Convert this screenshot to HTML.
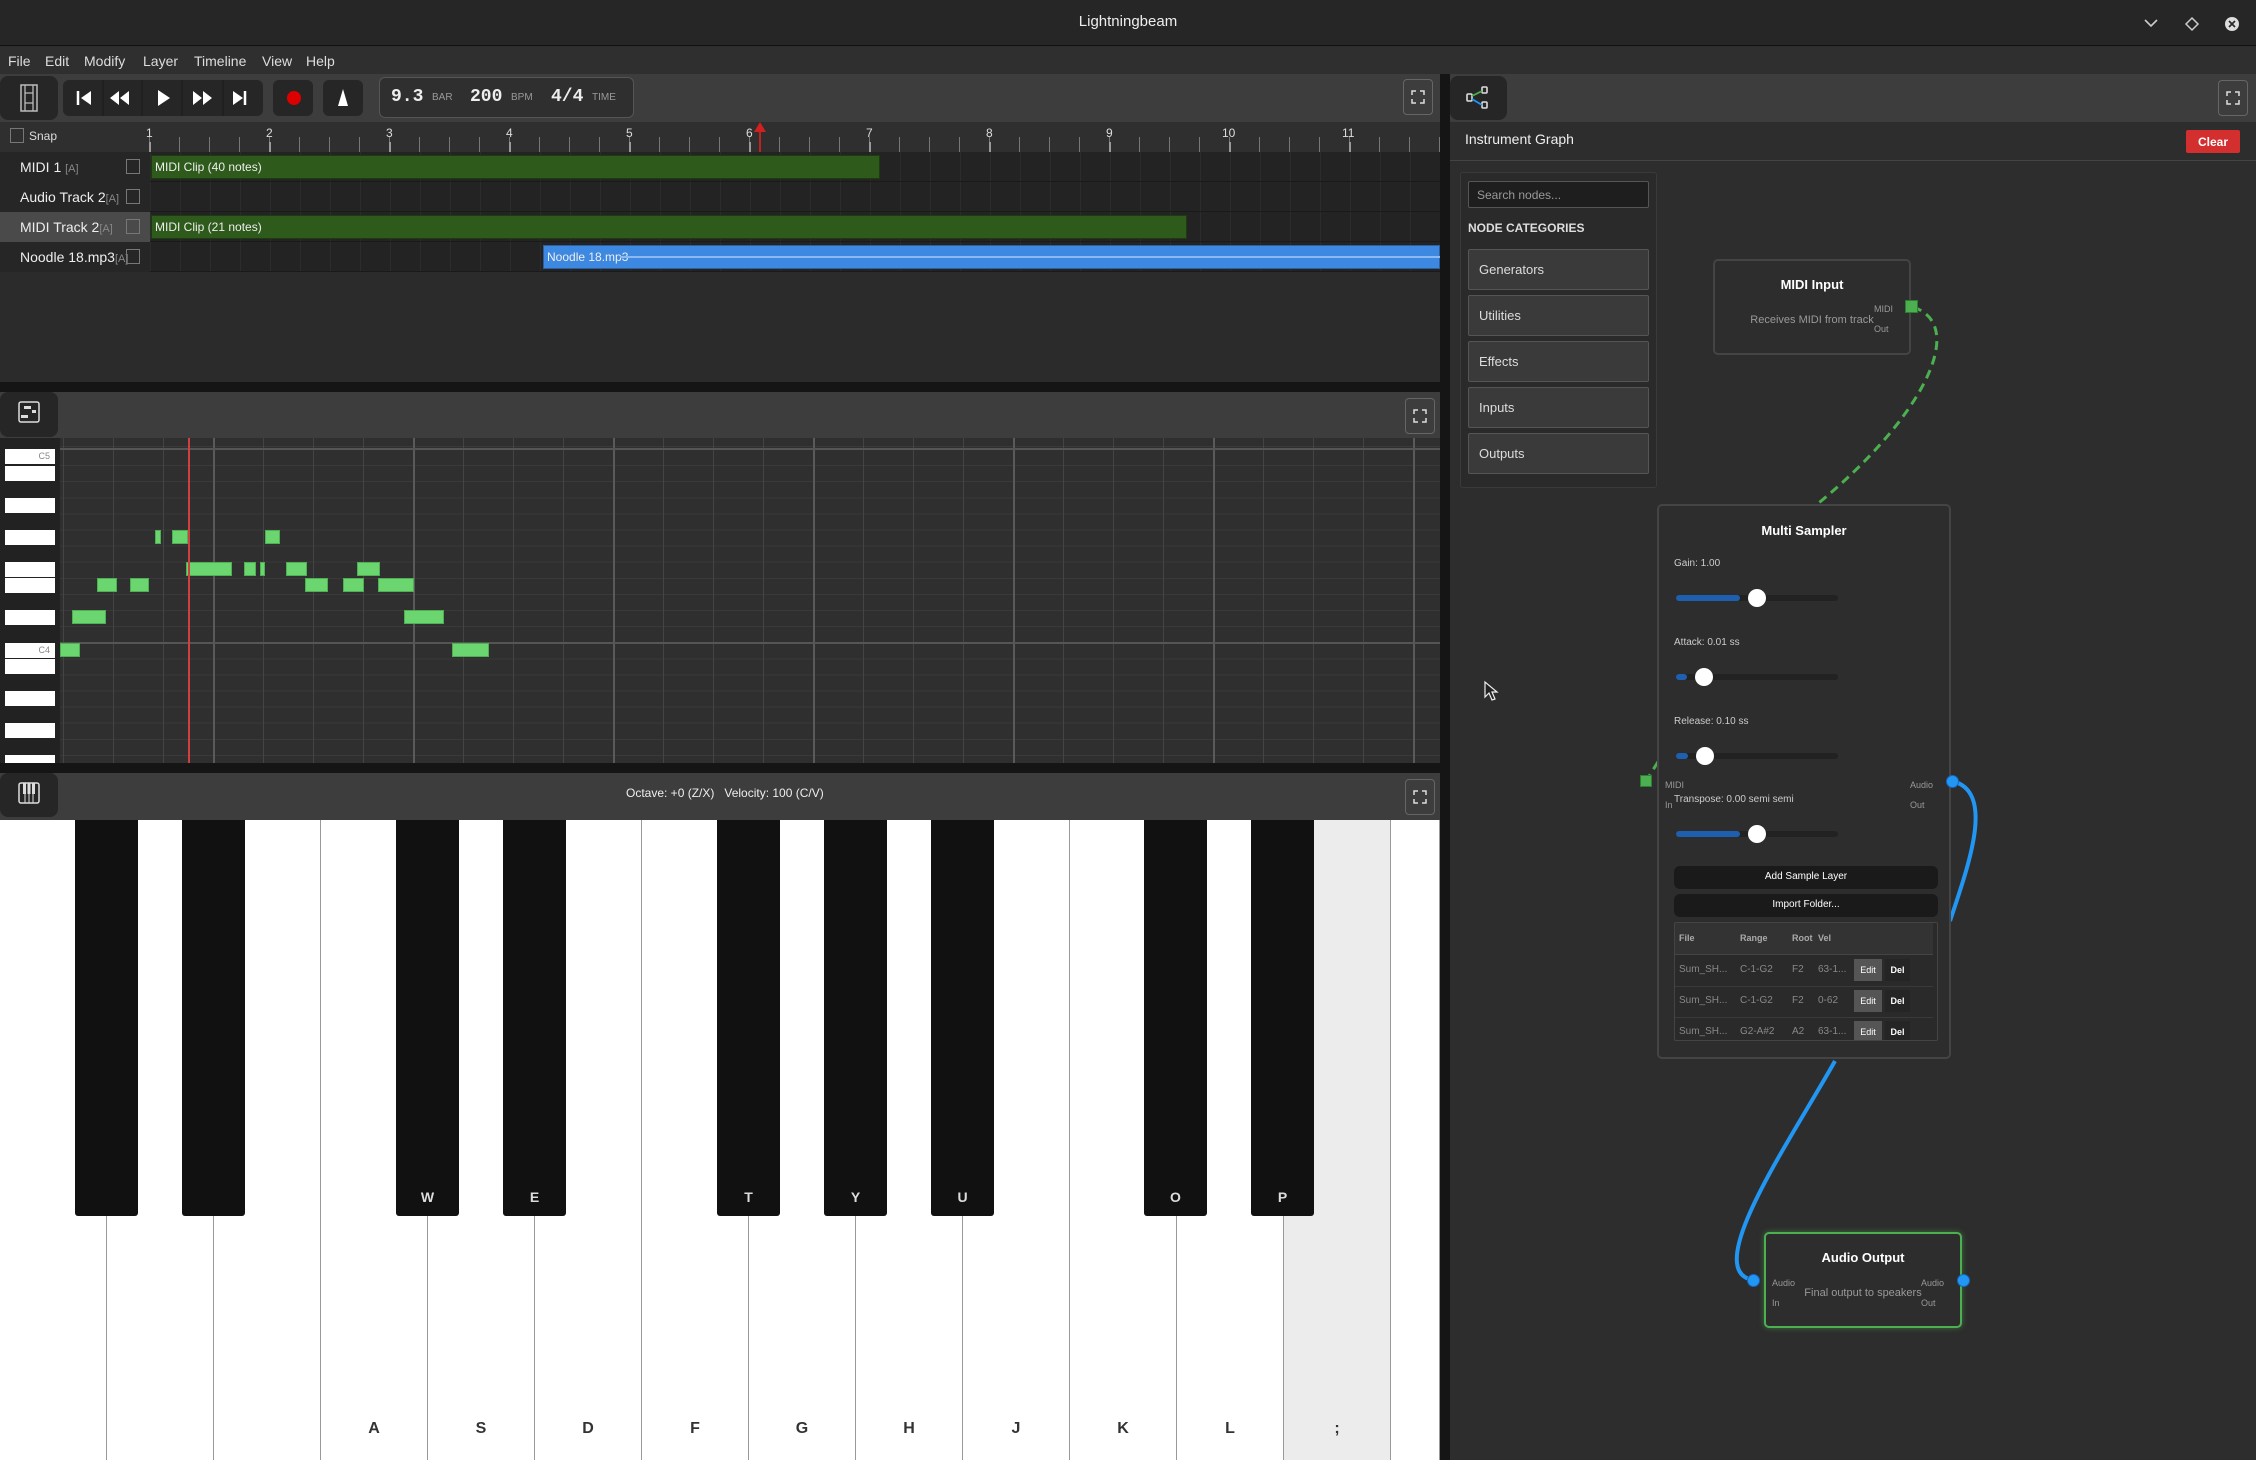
<!DOCTYPE html>
<html><head><meta charset="utf-8"><style>
*{box-sizing:border-box;margin:0;padding:0}
body{width:2256px;height:1460px;background:#2d2d2d;position:relative;overflow:hidden;font-family:"Liberation Sans",sans-serif;color:#ddd}
.a{position:absolute}
.btn{position:absolute;background:#262626;border-radius:8px}
.fs{position:absolute;border:1px solid #666;border-radius:4px;width:30px;height:36px}
.fs svg{position:absolute;left:7px;top:10px}
.tr{position:absolute;left:0;width:1440px;height:30px;border-bottom:1px solid #1a1a1a}
.th{position:absolute;left:0;top:0;width:150px;height:30px;background:#262626;font-size:14px;color:#eee;padding:7px 0 0 20px}
.th i{font-style:normal;color:#888;font-size:11px}
.cb{position:absolute;left:126px;top:7px;width:14px;height:15px;border:1px solid #777}
.clip{position:absolute;top:3px;height:24px;background:#2e5a1c;border:1px solid #1d3a10;font-size:12px;color:#eee;padding:4px 0 0 3px}
.cat{position:absolute;left:1468px;width:181px;height:41px;background:#3a3a3a;border:1px solid #555;border-radius:2px;font-size:13px;color:#ddd;padding:12px 0 0 10px}
.lbl{position:absolute;font-size:10px;color:#ccc}
.sl{position:absolute;left:1676px;width:162px;height:6px;border-radius:3px;background:#222}
.sl b{position:absolute;left:0;top:0;height:6px;border-radius:3px;background:#1e5fb0}
.sl i{position:absolute;top:-6px;width:18px;height:18px;border-radius:50%;background:#fff}
.wk{position:absolute;top:820px;width:107px;height:640px;background:#fff;border-right:1px solid #999;font:bold 16px "Liberation Sans",sans-serif;color:#333;text-align:center;padding-top:600px}
.bk{position:absolute;top:820px;width:63px;height:396px;background:#111;border-radius:0 0 3px 3px;font:bold 14px "Liberation Sans",sans-serif;color:#ddd;text-align:center;padding-top:369px}
.n{position:absolute;height:14px;background:#6bd66f;border:1px solid #4fb053}
.pk{position:absolute;left:5px;width:50px;height:15px;background:#fff}
.row td{padding:0}
</style></head><body>

<!-- title bar -->
<div class="a" style="left:0;top:0;width:2256px;height:46px;background:#262626;border-bottom:1px solid #111"></div>
<div class="a" style="left:0;top:13px;width:2256px;text-align:center;font-size:15px;color:#eee">Lightningbeam</div>
<svg class="a" style="left:2140px;top:14px" width="110" height="20"><path d="M5 6l6 6 6-6" stroke="#ccc" stroke-width="1.6" fill="none"/><path d="M52 4l6 6-6 6-6-6z" stroke="#ccc" stroke-width="1.5" fill="none"/><circle cx="92" cy="10" r="7" fill="#ddd"/><path d="M89 7l6 6M95 7l-6 6" stroke="#262626" stroke-width="1.6"/></svg>

<!-- menu -->
<div class="a" style="left:0;top:47px;width:2256px;height:27px;background:#2f2f2f"></div>
<div class="a" style="left:8px;top:53px;font-size:14px;color:#ddd;word-spacing:0">File</div>
<div class="a" style="left:45px;top:53px;font-size:14px;color:#ddd">Edit</div>
<div class="a" style="left:84px;top:53px;font-size:14px;color:#ddd">Modify</div>
<div class="a" style="left:143px;top:53px;font-size:14px;color:#ddd">Layer</div>
<div class="a" style="left:194px;top:53px;font-size:14px;color:#ddd">Timeline</div>
<div class="a" style="left:262px;top:53px;font-size:14px;color:#ddd">View</div>
<div class="a" style="left:306px;top:53px;font-size:14px;color:#ddd">Help</div>

<!-- left panel toolbar -->
<div class="a" style="left:0;top:74px;width:1440px;height:48px;background:#3d3d3d"></div>
<div class="btn" style="left:0;top:76px;width:58px;height:44px"></div>
<svg class="a" style="left:18px;top:83px" width="22" height="30"><rect x="3" y="2" width="16" height="26" fill="none" stroke="#bbb" stroke-width="1.5"/><path d="M7 2v26M15 2v26M7 10h8M7 20h8" stroke="#bbb" stroke-width="1.3"/></svg>
<div class="btn" style="left:63px;top:80px;width:200px;height:36px;border-radius:6px"></div>
<svg class="a" style="left:63px;top:80px" width="200" height="36"><g stroke="#1a1a1a"><path d="M103 0v36M142 0v36M182 0v36M223 0v36" transform="translate(-63 0)"/></g>
<path d="M15 11v14" stroke="#fff" stroke-width="2.5"/><path d="M28 11l-10 7 10 7z" fill="#fff"/>
<path d="M66 11l-9 7 9 7zM56 11l-9 7 9 7z" fill="#fff"/>
<path d="M95 10l12 8-12 8z" fill="#fff"/>
<path d="M130 11l9 7-9 7zM140 11l9 7-9 7z" fill="#fff"/>
<path d="M170 11l10 7-10 7z" fill="#fff"/><path d="M182 11v14" stroke="#fff" stroke-width="2.5"/></svg>
<div class="btn" style="left:273px;top:80px;width:40px;height:36px;border-radius:6px"></div>
<div class="a" style="left:287px;top:91px;width:14px;height:14px;border-radius:50%;background:#d00"></div>
<div class="btn" style="left:323px;top:80px;width:40px;height:36px;border-radius:6px"></div>
<svg class="a" style="left:333px;top:86px" width="20" height="24"><path d="M10 3l5 17H5z" fill="#fff"/></svg>
<div class="a" style="left:379px;top:77px;width:255px;height:41px;background:#2f2f2f;border:1px solid #555;border-radius:6px"></div>
<div class="a" style="left:391px;top:87px;font:bold 18px 'Liberation Mono',monospace;color:#eee">9.3</div>
<div class="a" style="left:432px;top:92px;font-size:10px;color:#999">BAR</div>
<div class="a" style="left:470px;top:87px;font:bold 18px 'Liberation Mono',monospace;color:#eee">200</div>
<div class="a" style="left:511px;top:92px;font-size:10px;color:#999">BPM</div>
<div class="a" style="left:551px;top:87px;font:bold 18px 'Liberation Mono',monospace;color:#eee">4/4</div>
<div class="a" style="left:592px;top:92px;font-size:10px;color:#999">TIME</div>
<div class="fs" style="left:1403px;top:79px"><svg width="14" height="14"><path d="M1 5V1h4M9 1h4v4M13 9v4H9M5 13H1V9" stroke="#ddd" stroke-width="1.5" fill="none"/></svg></div>

<!-- ruler -->
<div class="a" style="left:0;top:122px;width:1440px;height:30px;background:#2f2f2f"></div>
<div class="a" style="left:10px;top:128px;width:14px;height:15px;border:1px solid #777"></div>
<div class="a" style="left:29px;top:129px;font-size:12px;color:#ddd">Snap</div>
<div class="a" style="left:149px;top:137px;width:1291px;height:15px;background:repeating-linear-gradient(90deg,#777 0 1px,transparent 1px 30px)"></div>
<div class="a" style="left:149px;top:142px;width:1291px;height:10px;background:repeating-linear-gradient(90deg,#999 0 2px,transparent 2px 120px)"></div>
<div class="a" style="left:146px;top:126px;font-size:12px;color:#ddd">1</div>
<div class="a" style="left:266px;top:126px;font-size:12px;color:#ddd">2</div>
<div class="a" style="left:386px;top:126px;font-size:12px;color:#ddd">3</div>
<div class="a" style="left:506px;top:126px;font-size:12px;color:#ddd">4</div>
<div class="a" style="left:626px;top:126px;font-size:12px;color:#ddd">5</div>
<div class="a" style="left:746px;top:126px;font-size:12px;color:#ddd">6</div>
<div class="a" style="left:866px;top:126px;font-size:12px;color:#ddd">7</div>
<div class="a" style="left:986px;top:126px;font-size:12px;color:#ddd">8</div>
<div class="a" style="left:1106px;top:126px;font-size:12px;color:#ddd">9</div>
<div class="a" style="left:1222px;top:126px;font-size:12px;color:#ddd">10</div>
<div class="a" style="left:1342px;top:126px;font-size:12px;color:#ddd">11</div>

<!-- tracks -->
<div class="a" style="left:150px;top:152px;width:1290px;height:120px;background:#232323 repeating-linear-gradient(90deg,#2c2c2c 0 1px,transparent 1px 30px)"></div>
<div class="tr" style="top:152px"><div class="th">MIDI 1 <i>[A]</i></div><div class="cb"></div><div class="clip" style="left:151px;width:729px">MIDI Clip (40 notes)</div></div>
<div class="tr" style="top:182px"><div class="th">Audio Track 2<i>[A]</i></div><div class="cb"></div></div>
<div class="tr" style="top:212px"><div class="th" style="background:#4a4a4a">MIDI Track 2<i>[A]</i></div><div class="cb"></div><div class="clip" style="left:151px;width:1036px">MIDI Clip (21 notes)</div></div>
<div class="tr" style="top:242px"><div class="th">Noodle 18.mp3<i>[A]</i></div><div class="cb"></div><div class="clip" style="left:543px;width:897px;background:#3d88e0;border-color:#2a5fa0">Noodle 18.mp3</div></div>
<div class="a" style="left:620px;top:256px;width:820px;height:2px;background:#8cb9ef"></div>
<div class="a" style="left:759px;top:124px;width:2px;height:28px;background:#c02020"></div>
<svg class="a" style="left:753px;top:122px" width="14" height="10"><path d="M7 0l6 10H1z" fill="#d02020"/></svg>
<div class="a" style="left:0;top:272px;width:1440px;height:110px;background:#2b2b2b"></div>

<!-- divider -->
<div class="a" style="left:0;top:382px;width:1440px;height:10px;background:#151515"></div>
<div class="a" style="left:1440px;top:74px;width:10px;height:1386px;background:#151515"></div>

<!-- piano roll -->
<div class="a" style="left:0;top:392px;width:1440px;height:46px;background:#3d3d3d"></div>
<div class="btn" style="left:0;top:392px;width:58px;height:45px"></div>
<svg class="a" style="left:17px;top:400px" width="24" height="24"><rect x="2" y="2" width="20" height="20" rx="2" fill="none" stroke="#ddd" stroke-width="1.5"/><rect x="7" y="6" width="7" height="3" fill="#ddd"/><rect x="15" y="10" width="4" height="3" fill="#ddd"/><rect x="4" y="15" width="7" height="3" fill="#ddd"/></svg>
<div class="fs" style="left:1405px;top:398px"><svg width="14" height="14"><path d="M1 5V1h4M9 1h4v4M13 9v4H9M5 13H1V9" stroke="#ddd" stroke-width="1.5" fill="none"/></svg></div>
<div class="a" style="left:0;top:438px;width:1440px;height:325px;background:#222"></div>
<div class="a" style="left:60px;top:438px;width:1380px;height:325px;background:repeating-linear-gradient(90deg,#5a5a5a 0 2px,transparent 2px 200px) 153px 0,repeating-linear-gradient(90deg,#444 0 1px,transparent 1px 50px) 3px 0,repeating-linear-gradient(180deg,#3a3a3a 0 1px,transparent 1px 16.1px) 0 11px,#2f2f2f"></div>
<div class="a" style="left:60px;top:448px;width:1380px;height:2px;background:#555"></div>
<div class="a" style="left:60px;top:642px;width:1380px;height:2px;background:#555"></div>
<div class="pk" style="top:449px;font-size:9px;color:#888;text-align:right;padding:2px 5px 0 0">C5</div>
<div class="pk" style="top:466px"></div><div class="pk" style="top:498px"></div><div class="pk" style="top:530px"></div><div class="pk" style="top:562px"></div><div class="pk" style="top:578px"></div><div class="pk" style="top:610px"></div>
<div class="pk" style="top:643px;font-size:9px;color:#888;text-align:right;padding:2px 5px 0 0">C4</div>
<div class="pk" style="top:659px"></div><div class="pk" style="top:691px"></div><div class="pk" style="top:723px"></div><div class="pk" style="top:755px;height:8px"></div>
<div class="n" style="left:155px;top:530px;width:6px"></div>
<div class="n" style="left:172px;top:530px;width:16px"></div>
<div class="n" style="left:265px;top:530px;width:15px"></div>
<div class="n" style="left:186px;top:562px;width:46px"></div>
<div class="n" style="left:244px;top:562px;width:12px"></div>
<div class="n" style="left:260px;top:562px;width:5px"></div>
<div class="n" style="left:286px;top:562px;width:21px"></div>
<div class="n" style="left:357px;top:562px;width:23px"></div>
<div class="n" style="left:97px;top:578px;width:20px"></div>
<div class="n" style="left:130px;top:578px;width:19px"></div>
<div class="n" style="left:305px;top:578px;width:23px"></div>
<div class="n" style="left:343px;top:578px;width:21px"></div>
<div class="n" style="left:378px;top:578px;width:36px"></div>
<div class="n" style="left:72px;top:610px;width:34px"></div>
<div class="n" style="left:404px;top:610px;width:40px"></div>
<div class="n" style="left:60px;top:643px;width:20px"></div>
<div class="n" style="left:452px;top:643px;width:37px"></div>
<div class="a" style="left:188px;top:438px;width:2px;height:325px;background:#d04040"></div>
<div class="a" style="left:0;top:763px;width:1440px;height:10px;background:#151515"></div>

<!-- keyboard -->
<div class="a" style="left:0;top:773px;width:1440px;height:47px;background:#3d3d3d"></div>
<div class="btn" style="left:0;top:773px;width:58px;height:44px"></div>
<svg class="a" style="left:17px;top:781px" width="24" height="24"><rect x="2" y="2" width="20" height="20" rx="2" fill="none" stroke="#ddd" stroke-width="1.5"/><path d="M8 2v20M12 2v20M16 2v20" stroke="#ddd" stroke-width="1"/><rect x="6" y="2" width="3" height="11" fill="#ddd"/><rect x="10.5" y="2" width="3" height="11" fill="#ddd"/><rect x="15" y="2" width="3" height="11" fill="#ddd"/></svg>
<div class="a" style="left:626px;top:786px;font-size:12px;color:#eee">Octave: +0 (Z/X) &nbsp;&nbsp;Velocity: 100 (C/V)</div>
<div class="fs" style="left:1405px;top:779px"><svg width="14" height="14"><path d="M1 5V1h4M9 1h4v4M13 9v4H9M5 13H1V9" stroke="#ddd" stroke-width="1.5" fill="none"/></svg></div>
<div class="wk" style="left:0"></div>
<div class="wk" style="left:107px"></div>
<div class="wk" style="left:214px"></div>
<div class="wk" style="left:321px">A</div>
<div class="wk" style="left:428px">S</div>
<div class="wk" style="left:535px">D</div>
<div class="wk" style="left:642px">F</div>
<div class="wk" style="left:749px">G</div>
<div class="wk" style="left:856px">H</div>
<div class="wk" style="left:963px">J</div>
<div class="wk" style="left:1070px">K</div>
<div class="wk" style="left:1177px">L</div>
<div class="wk" style="left:1284px;background:#ececec">;</div>
<div class="wk" style="left:1391px;width:49px"></div>
<div class="bk" style="left:75px"></div>
<div class="bk" style="left:182px"></div>
<div class="bk" style="left:396px">W</div>
<div class="bk" style="left:503px">E</div>
<div class="bk" style="left:717px">T</div>
<div class="bk" style="left:824px">Y</div>
<div class="bk" style="left:931px">U</div>
<div class="bk" style="left:1144px">O</div>
<div class="bk" style="left:1251px">P</div>

<!-- right panel -->
<div class="a" style="left:1450px;top:74px;width:806px;height:48px;background:#3d3d3d"></div>
<div class="btn" style="left:1450px;top:76px;width:57px;height:44px"></div>
<svg class="a" style="left:1464px;top:84px" width="28" height="28"><rect x="3" y="10" width="5" height="7" rx="1" fill="none" stroke="#ddd" stroke-width="1.6"/><rect x="18" y="3" width="5" height="6" rx="1" fill="none" stroke="#ddd" stroke-width="1.6"/><rect x="18" y="18" width="5" height="6" rx="1" fill="none" stroke="#ddd" stroke-width="1.6"/><path d="M8 12l10-5" stroke="#4caf50" stroke-width="1.8"/><path d="M8 15l10 6" stroke="#2196f3" stroke-width="1.8"/></svg>
<div class="fs" style="left:2218px;top:80px;height:36px"><svg width="14" height="14"><path d="M1 5V1h4M9 1h4v4M13 9v4H9M5 13H1V9" stroke="#ddd" stroke-width="1.5" fill="none"/></svg></div>
<div class="a" style="left:1450px;top:122px;width:806px;height:39px;background:#2d2d2d;border-bottom:1px solid #444"></div>
<div class="a" style="left:1465px;top:131px;font-size:14px;color:#eee">Instrument Graph</div>
<div class="a" style="left:2186px;top:130px;width:54px;height:23px;background:#d32f2f;border-radius:2px;font:bold 12px 'Liberation Sans',sans-serif;color:#fff;text-align:center;padding-top:5px">Clear</div>

<div class="a" style="left:1460px;top:172px;width:197px;height:316px;background:#2a2a2a;border:1px solid #3a3a3a;border-radius:3px"></div>
<div class="a" style="left:1468px;top:181px;width:181px;height:27px;background:#1e1e1e;border:1px solid #555;border-radius:2px;font-size:12px;color:#999;padding:6px 0 0 8px">Search nodes...</div>
<div class="a" style="left:1468px;top:221px;font:bold 12px 'Liberation Sans',sans-serif;color:#ddd">NODE CATEGORIES</div>
<div class="cat" style="top:249px">Generators</div>
<div class="cat" style="top:295px">Utilities</div>
<div class="cat" style="top:341px">Effects</div>
<div class="cat" style="top:387px">Inputs</div>
<div class="cat" style="top:433px">Outputs</div>

<svg class="a" style="left:1450px;top:161px" width="806" height="1299">
<path d="M463 146 C520 165 470 260 365 345 C300 420 260 520 196 620" transform="translate(0,0)" stroke="#4caf50" stroke-width="3" stroke-dasharray="9 6" fill="none"/>
<path d="M502 620 C545 630 520 700 500 760" stroke="#2196f3" stroke-width="4" fill="none"/>
<path d="M385 900 C340 980 250 1110 303 1119" stroke="#2196f3" stroke-width="4" fill="none"/>
</svg>

<!-- MIDI input node -->
<div class="a" style="left:1713px;top:259px;width:198px;height:96px;background:#2d2d2d;border:2px solid #444;border-radius:5px"></div>
<div class="a" style="left:1713px;top:277px;width:198px;text-align:center;font:bold 13px 'Liberation Sans',sans-serif;color:#fff">MIDI Input</div>
<div class="a" style="left:1713px;top:314px;width:198px;text-align:center;font-size:11px;color:#999">Receives MIDI from track</div>
<div class="lbl" style="left:1874px;top:304px;font-size:9px;color:#999">MIDI</div>
<div class="lbl" style="left:1874px;top:324px;font-size:9px;color:#999">Out</div>
<div class="a" style="left:1905px;top:300px;width:13px;height:13px;background:#4caf50;border:1px solid #2e7d32"></div>

<!-- Multi sampler -->
<div class="a" style="left:1657px;top:504px;width:294px;height:555px;background:#2d2d2d;border:2px solid #444;border-radius:5px"></div>
<div class="a" style="left:1657px;top:523px;width:294px;text-align:center;font:bold 13px 'Liberation Sans',sans-serif;color:#fff">Multi Sampler</div>
<div class="lbl" style="left:1674px;top:558px">Gain: 1.00</div>
<div class="sl" style="top:595px"><b style="width:64px"></b><i style="left:72px"></i></div>
<div class="lbl" style="left:1674px;top:637px">Attack: 0.01 ss</div>
<div class="sl" style="top:674px"><b style="width:11px"></b><i style="left:19px"></i></div>
<div class="lbl" style="left:1674px;top:716px">Release: 0.10 ss</div>
<div class="sl" style="top:753px"><b style="width:12px"></b><i style="left:20px"></i></div>
<div class="lbl" style="left:1665px;top:780px;font-size:9px;color:#999">MIDI</div>
<div class="lbl" style="left:1665px;top:800px;font-size:9px;color:#999">In</div>
<div class="lbl" style="left:1674px;top:794px">Transpose: 0.00 semi semi</div>
<div class="lbl" style="left:1910px;top:780px;font-size:9px;color:#999">Audio</div>
<div class="lbl" style="left:1910px;top:800px;font-size:9px;color:#999">Out</div>
<div class="sl" style="top:831px"><b style="width:64px"></b><i style="left:72px"></i></div>
<div class="a" style="left:1674px;top:866px;width:264px;height:23px;background:#1a1a1a;border-radius:6px;font:10px 'Liberation Sans',sans-serif;color:#fff;text-align:center;padding-top:5px">Add Sample Layer</div>
<div class="a" style="left:1674px;top:894px;width:264px;height:23px;background:#1a1a1a;border-radius:6px;font:10px 'Liberation Sans',sans-serif;color:#fff;text-align:center;padding-top:5px">Import Folder...</div>
<div class="a" style="left:1674px;top:922px;width:264px;height:119px;background:#2a2a2a;border:1px solid #444;border-radius:2px"></div>
<div class="a" style="left:1675px;top:923px;width:258px;height:32px;background:#333;border-bottom:1px solid #444"></div>
<div class="lbl" style="left:1679px;top:933px;font-weight:bold;font-size:9px;color:#aaa">File</div>
<div class="lbl" style="left:1740px;top:933px;font-weight:bold;font-size:9px;color:#aaa">Range</div>
<div class="lbl" style="left:1792px;top:933px;font-weight:bold;font-size:9px;color:#aaa">Root</div>
<div class="lbl" style="left:1818px;top:933px;font-weight:bold;font-size:9px;color:#aaa">Vel</div>
<div class="lbl" style="left:1679px;top:964px;color:#888">Sum_SH...</div><div class="lbl" style="left:1740px;top:964px;color:#888">C-1-G2</div><div class="lbl" style="left:1792px;top:964px;color:#888">F2</div><div class="lbl" style="left:1818px;top:964px;color:#888">63-1...</div>
<div class="a" style="left:1854px;top:959px;width:28px;height:22px;background:#555;font-size:9px;color:#fff;text-align:center;padding-top:6px">Edit</div><div class="a" style="left:1885px;top:959px;width:25px;height:22px;background:#252525;font:bold 9px 'Liberation Sans',sans-serif;color:#fff;text-align:center;padding-top:6px">Del</div>
<div class="a" style="left:1675px;top:986px;width:258px;height:1px;background:#3a3a3a"></div>
<div class="lbl" style="left:1679px;top:995px;color:#888">Sum_SH...</div><div class="lbl" style="left:1740px;top:995px;color:#888">C-1-G2</div><div class="lbl" style="left:1792px;top:995px;color:#888">F2</div><div class="lbl" style="left:1818px;top:995px;color:#888">0-62</div>
<div class="a" style="left:1854px;top:990px;width:28px;height:22px;background:#555;font-size:9px;color:#fff;text-align:center;padding-top:6px">Edit</div><div class="a" style="left:1885px;top:990px;width:25px;height:22px;background:#252525;font:bold 9px 'Liberation Sans',sans-serif;color:#fff;text-align:center;padding-top:6px">Del</div>
<div class="a" style="left:1675px;top:1017px;width:258px;height:1px;background:#3a3a3a"></div>
<div class="lbl" style="left:1679px;top:1026px;color:#888">Sum_SH...</div><div class="lbl" style="left:1740px;top:1026px;color:#888">G2-A#2</div><div class="lbl" style="left:1792px;top:1026px;color:#888">A2</div><div class="lbl" style="left:1818px;top:1026px;color:#888">63-1...</div>
<div class="a" style="left:1854px;top:1021px;width:28px;height:19px;background:#555;font-size:9px;color:#fff;text-align:center;padding-top:6px">Edit</div><div class="a" style="left:1885px;top:1021px;width:25px;height:19px;background:#252525;font:bold 9px 'Liberation Sans',sans-serif;color:#fff;text-align:center;padding-top:6px">Del</div>
<div class="a" style="left:1640px;top:775px;width:12px;height:12px;background:#4caf50;border:1px solid #2e7d32"></div>
<div class="a" style="left:1946px;top:775px;width:13px;height:13px;border-radius:50%;background:#2196f3;border:1px solid #1565c0"></div>

<!-- Audio output -->
<div class="a" style="left:1764px;top:1232px;width:198px;height:96px;background:#2d2d2d;border:2px solid #4caf50;border-radius:5px;box-shadow:0 0 6px rgba(76,175,80,.5)"></div>
<div class="a" style="left:1764px;top:1250px;width:198px;text-align:center;font:bold 13px 'Liberation Sans',sans-serif;color:#fff">Audio Output</div>
<div class="a" style="left:1764px;top:1287px;width:198px;text-align:center;font-size:11px;color:#999">Final output to speakers</div>
<div class="lbl" style="left:1772px;top:1278px;font-size:9px;color:#999">Audio</div>
<div class="lbl" style="left:1772px;top:1298px;font-size:9px;color:#999">In</div>
<div class="lbl" style="left:1921px;top:1278px;font-size:9px;color:#999">Audio</div>
<div class="lbl" style="left:1921px;top:1298px;font-size:9px;color:#999">Out</div>
<div class="a" style="left:1747px;top:1274px;width:13px;height:13px;border-radius:50%;background:#2196f3;border:1px solid #1565c0"></div>
<div class="a" style="left:1957px;top:1274px;width:13px;height:13px;border-radius:50%;background:#2196f3;border:1px solid #1565c0"></div>

<svg class="a" style="left:1483px;top:680px" width="16" height="22"><path d="M2 2v15l4-4 3 7 3-1-3-7h5z" fill="#222" stroke="#eee" stroke-width="1.2"/></svg>
</body></html>
